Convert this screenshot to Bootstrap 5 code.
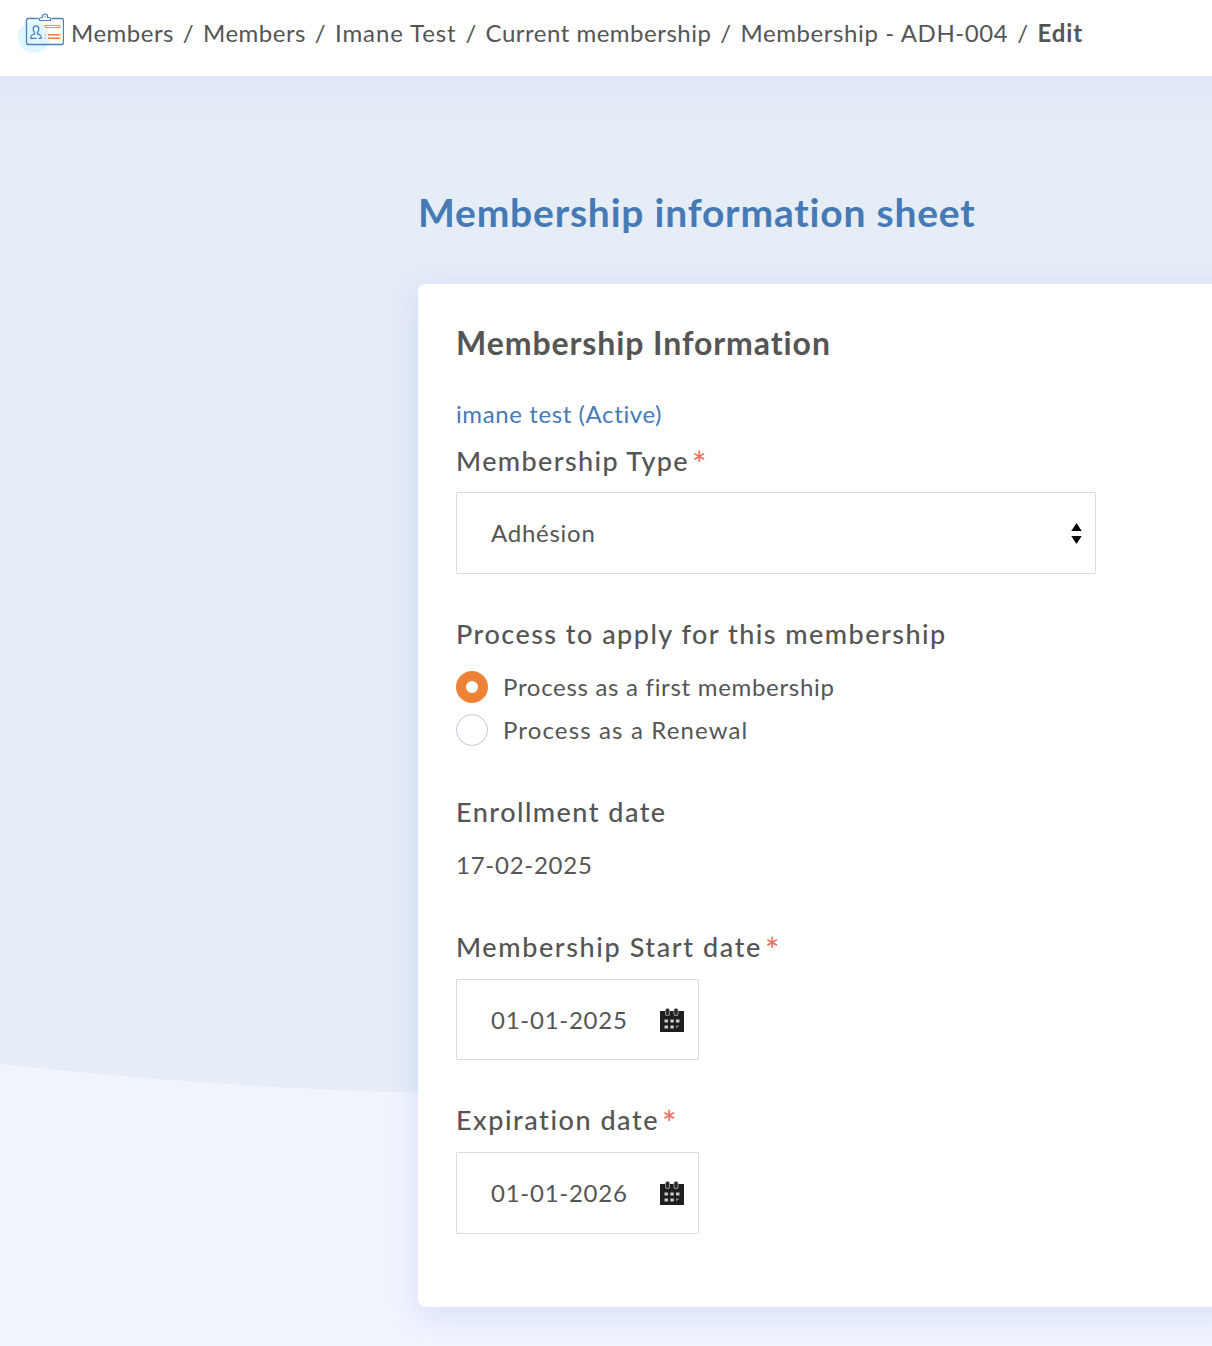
<!DOCTYPE html>
<html lang="en">
<head>
<meta charset="utf-8">
<meta name="viewport" content="width=device-width, initial-scale=1">
<title>Membership - ADH-004 - Edit</title>
<link href="https://cdn.jsdelivr.net/npm/bootstrap@5.3.0/dist/css/bootstrap.min.css" rel="stylesheet">
<style>
body{font-family:Lato,"Open Sans",sans-serif;font-size:24px;line-height:28px;color:#555;background:#f1f4fd;letter-spacing:.74px}
.topbar{height:76px;padding:0 0 0 18px}
.topbar-icon{width:46px;height:42px;margin-top:12px}
.crumbs{margin:19px 0 0 7px;white-space:nowrap;letter-spacing:.5px}
.crumbs a{color:#555}
.crumbs .sep{width:29px;text-align:center}
.crumbs .wide{letter-spacing:.9px}
.crumbs .code{letter-spacing:.6px}
.stage{height:1270px}
.backdrop{left:0;top:0;width:1212px;height:1270px}
.topfade{left:0;top:0;right:0;height:46px;background:linear-gradient(#e0e6f7,#e3e9f7 35%,rgba(230,237,247,0))}
.sheet{margin-left:418px}
.sheet-title{font-size:39px;font-weight:700;line-height:48px;color:#467ab5;letter-spacing:.79px;margin:112px 0 48px;white-space:nowrap}
.sheet-card{width:830px;height:1023px;border-radius:8px;padding:39px 38px 0;box-shadow:0 8px 30px rgba(100,130,235,.19)}
.sheet-card h2{font-size:32px;font-weight:700;line-height:40px;letter-spacing:.92px;margin:0 0 37px}
.member-link{color:#467ab5;letter-spacing:.6px}
.field-label{font-size:27px;font-weight:500;line-height:36px;letter-spacing:1.47px;display:block}
.type-label{letter-spacing:1.37px;margin-top:15px}
.start-label{letter-spacing:1.6px;margin-top:50px}
.end-label{letter-spacing:1.53px;margin-top:42px}
.req{color:#ee6b60;font-weight:400;font-size:34px;line-height:0;vertical-align:-6px;margin-left:3px;letter-spacing:0}
.box{border:1px solid #d7dce6;border-radius:1px;background:#fff;padding-left:34px}
.box-type{width:640px;height:82px;padding-right:13px;margin-top:13px}
.box-date{width:243px;height:81px;padding-right:14px;margin-top:14px}
.box-end{height:82px}
.process-label{margin-top:42px}
.first-choice{margin-top:19px;letter-spacing:.7px}
.second-choice{margin-top:11px;letter-spacing:1.14px}
.enroll-label{margin-top:48px}
.enroll-value{margin-top:21px}
.radio-dot{width:32px;height:32px;border:1px solid #c3c8d9;border-radius:50%;margin-right:15px}
.radio-dot.on{border:10px solid #ee8237}
</style>
</head>
<body class="overflow-hidden">
<header class="topbar bg-white d-flex align-items-start">
  <svg class="topbar-icon flex-shrink-0" viewBox="18 12 46 42" fill="none">
    <circle cx="34" cy="37" r="16" fill="#e0f6fe"/>
    <path d="M38.500 18.500H28.500Q26.500 18.500 26.500 20.500V42.500Q26.500 44.500 28.500 44.500H61.500Q63.500 44.500 63.500 42.500V20.500Q63.500 18.500 61.500 18.500H51.500" stroke="#4a80c0" stroke-width="1.300"/>
    <path d="M39.500 20.500V19Q39.500 17.500 41.500 17.500H42.500Q42 14 45 14T47.500 17.500H48.500Q50.500 17.500 50.500 19V20.500Z" stroke="#4a80c0" stroke-width="1.200"/>
    <circle cx="45" cy="16.300" r=".7" fill="#4a80c0"/>
    <path d="M34.500 32.500C32.700 30.500 32.500 25.800 36 25.800S39.500 30.500 37.500 32.500V34L40 35Q41.300 35.700 41.300 38.400H38.500M34.500 32.500V34L32 35Q30.700 35.700 30.700 38.400H36.500" stroke="#4a80c0" stroke-width="1.300"/>
    <path d="M44.800 25.400H60V27.600H45.500Z" stroke="#f08a45"/>
    <path d="M48 34.800H60.300M48 38.300H60.300" stroke="#f17d2f" stroke-width="1.500"/>
    <path d="M44.500 34.800h1.500M44.500 38.300h1.500" stroke="#f0a878" stroke-width="1.200"/>
  </svg>
  <nav class="crumbs d-flex" aria-label="breadcrumb">
    <a class="text-decoration-none" href="#">Members</a><span class="sep">/</span>
    <a class="text-decoration-none" href="#">Members</a><span class="sep">/</span>
    <a class="text-decoration-none wide" href="#">Imane Test</a><span class="sep">/</span>
    <a class="text-decoration-none" href="#">Current membership</a><span class="sep">/</span>
    <a class="text-decoration-none code" href="#">Membership - ADH-004</a><span class="sep">/</span>
    <span class="fw-bold wide">Edit</span>
  </nav>
</header>
<main class="stage position-relative overflow-hidden">
  <svg class="backdrop position-absolute" viewBox="0 0 1212 1270"><path d="M0 0H1212V1018.500H550Q275 1018.500 0 988Z" fill="#e6edf7"/></svg>
  <div class="topfade position-absolute"></div>
  <div class="sheet position-relative d-flex flex-column">
    <h1 class="sheet-title">Membership information sheet</h1>
    <form class="sheet-card bg-white d-flex flex-column align-items-start">
      <h2>Membership Information</h2>
      <a class="member-link text-decoration-none" href="#">imane test (Active)</a>
      <label class="field-label type-label">Membership Type<span class="req">*</span></label>
      <div class="box box-type d-flex align-items-center justify-content-between">
        <span>Adhésion</span>
        <svg width="11" height="22" viewBox="0 0 11 22"><path d="M.3 9 5.500 1 10.700 9ZM.3 14H10.700L5.500 22Z" fill="#000"/></svg>
      </div>
      <span class="field-label process-label">Process to apply for this membership</span>
      <label class="first-choice d-flex align-items-center"><span class="radio-dot on"></span><span>Process as a first membership</span></label>
      <label class="second-choice d-flex align-items-center"><span class="radio-dot"></span><span>Process as a Renewal</span></label>
      <span class="field-label enroll-label">Enrollment date</span>
      <span class="enroll-value">17-02-2025</span>
      <label class="field-label start-label">Membership Start date<span class="req">*</span></label>
      <div class="box box-date d-flex align-items-center justify-content-between">
        <span>01-01-2025</span>
        <svg width="24" height="24" viewBox="0 0 24 24"><g id="calendar"><path d="M0 3H24V24H0Z" fill="#1d1d1f"/><path d="M7.500 2.500V5.500M16 2.500V5.500" stroke="#aaa" stroke-width="5" stroke-linecap="round"/><path d="M7.500 2.500V5.500M16 2.500V5.500" stroke="#2a2a2a" stroke-width="3.400" stroke-linecap="round"/><path d="M4.500 11.500h3.500v3h-3.500zM10.300 11.500h3.500v3h-3.500zM16 11.500h3.500v3h-3.500zM4.500 17.500h3.500v3h-3.500zM10.300 17.500h3.500v3h-3.500z" fill="#c9c9c9"/><path d="M16 17.500h3.500l-3.500 3z" fill="#888"/></g></svg>
      </div>
      <label class="field-label end-label">Expiration date<span class="req">*</span></label>
      <div class="box box-date box-end d-flex align-items-center justify-content-between">
        <span>01-01-2026</span>
        <svg width="24" height="24" viewBox="0 0 24 24"><use href="#calendar"/></svg>
      </div>
    </form>
  </div>
</main>
<script src="https://cdn.jsdelivr.net/npm/bootstrap@5.3.0/dist/js/bootstrap.bundle.min.js"></script>
</body>
</html>
